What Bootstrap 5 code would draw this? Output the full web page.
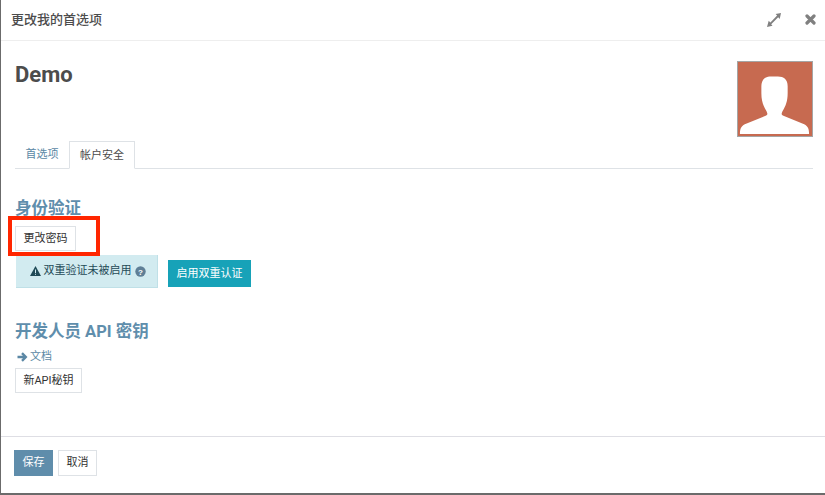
<!DOCTYPE html>
<html lang="zh"><head><meta charset="utf-8"><title>更改我的首选项</title>
<link href="https://cdn.jsdelivr.net/npm/bootstrap@5.3.0/dist/css/bootstrap.min.css" rel="stylesheet">
<style>
html,body{height:100%;overflow:hidden}
body{font-family:"Roboto","Noto Sans CJK SC",sans-serif;font-size:11px;color:#4c4c4c;background:#fff}
.dlg{height:495px;border-left:1px solid #6b6b6b;border-bottom:2px solid #6b6b6b}
.dlg-head{height:41px;border-bottom:1px solid #eee;padding:0 9px 0 10px}
.dlg-title{font-size:13px;font-weight:500;color:#4c4c4c}
.dlg-tools{gap:24px;margin-top:-1px}
.dlg-body{padding:0 12px 0 14px;position:relative}
.who{height:100px;padding-top:20px}
.who h1{font-size:22px;font-weight:700;line-height:28px;margin:0;color:#4c4c4c}
.face{width:76px;height:76px;border:1px solid #a5a5a5;background:#c76a50;display:block}
.tabbar{height:28px;border-bottom:1px solid #dee2e6;margin:0;padding:0;list-style:none}
.tabx{display:block;height:28px;padding:0 10.500px 0 10.500px;line-height:27px;font-size:11px;color:#5b88a5;text-decoration:none}
.tabx.on{color:#4c4c4c;background:#fff;border:1px solid #dee2e6;border-bottom-color:#fff;padding:0 10px;width:66px;white-space:nowrap}
.sect{font-size:16.500px;font-weight:700;color:#5f8eac;line-height:20px;margin:0}
.sect1{margin-top:30px}
.sect2{margin-top:34px}
.btn-plain{display:block;background:#fff;border:1px solid #dee2e6;border-radius:0;color:#333;font-size:11px;height:25px;line-height:23px;padding:0;text-align:center}
.pw{width:61px;margin-top:7px}
.twofa{margin-top:4px;margin-left:1px;gap:10px}
.note{width:142px;height:33px;background:#d2ebf0;border-bottom:1px solid #bfe0e7;border-right:1px solid #bfe0e7;color:#1f4a57;font-size:11px;gap:3px;padding-left:2px}
.btn-teal{background:#17a2b8;border:0;border-radius:0;color:#fff;font-size:11px;height:27px;line-height:27px;width:83px;padding:0;margin-top:5px}
.doc{display:flex;align-items:center;gap:2px;margin-top:6px;height:18px;font-size:11px;color:#5b88a5;text-decoration:none;padding-left:2px}
.newk{width:67px;margin-top:2px}
.redbox{position:absolute;left:7px;top:175px;width:92px;height:40px;border:4px solid #ff2600}
.dlg-foot{height:57px;border-top:1px solid #dedee4;padding:13px 13px;gap:5px}
.btn-save{background:#5f8dab;border:1px solid #5f8dab;border-radius:0;color:#fff;font-size:11px;width:39px;height:26px;padding:0;line-height:24px}
.btn-cancel{background:#fff;border:1px solid #dee2e6;border-radius:0;color:#333;font-size:11px;width:39px;height:26px;padding:0;line-height:24px}
</style></head><body>
<div class="dlg d-flex flex-column">
 <div class="dlg-head d-flex align-items-center justify-content-between">
  <div class="dlg-title">更改我的首选项</div>
  <div class="dlg-tools d-flex align-items-center">
   <svg width="14" height="14" viewBox="0 0 14 14" fill="#808080"><path d="M14 0 8.600.9l1.500 1.500-6.700 7-1.700-1.600L0 14l5.500-1.200-1.300-1.500 7-7 1.500 1.600z"/></svg>
   <svg width="11" height="11" viewBox="0 0 11 11"><path d="M2 2l7 7M9 2l-7 7" stroke="#808080" stroke-width="3.200" stroke-linecap="round"/></svg>
  </div>
 </div>
 <div class="dlg-body flex-grow-1">
  <div class="who d-flex justify-content-between align-items-start">
   <h1>Demo</h1>
   <svg class="face" viewBox="0 0 76 76"><path fill="#fff" d="M2 74c0-5 1-8 5-10L29 55c2-1 1-3 0-5-3-5-5-10-5-18v-7c0-7 4-10 10-10h7c6 0 10 3 10 10v7c0 8-2 13-5 18-1 2-2 4 0 5L68 64c4 2 5 5 5 10z"/></svg>
  </div>
  <ul class="tabbar d-flex">
   <li><a class="tabx" href="#">首选项</a></li>
   <li><a class="tabx on" href="#">帐户安全</a></li>
  </ul>
  <h2 class="sect sect1">身份验证</h2>
  <button class="btn-plain pw" type="button">更改密码</button>
  <div class="twofa d-flex align-items-start">
   <div class="note d-flex align-items-center justify-content-center">
    <svg width="11" height="10" viewBox="0 0 11 10"><path fill="#1f4a57" d="M5.500 0 11 10H0z"/><path stroke="#d2ebf0" d="M5.500 3.500v3.500M5.500 7.800v1"/></svg>
    <span>双重验证未被启用</span>
    <svg width="11" height="11" viewBox="0 0 11 11"><circle cx="5.500" cy="5.500" r="5.200" fill="#5f7f96"/><text x="5.500" y="8.500" text-anchor="middle" font-size="8" font-weight="700" fill="#fff" font-family="Liberation Sans">?</text></svg>
   </div>
   <button class="btn-teal" type="button">启用双重认证</button>
  </div>
  <h2 class="sect sect2">开发人员 API 密钥</h2>
  <a class="doc" href="#"><svg width="11" height="10" viewBox="0 0 11 10"><path d="M.5 5h8M5 1.200 8.800 5 5 8.800" fill="none" stroke="#5b88a5" stroke-width="2.400"/></svg>文档</a>
  <button class="btn-plain newk" type="button">新API秘钥</button>
  <div class="redbox"></div>
 </div>
 <div class="dlg-foot d-flex">
  <button class="btn-save" type="button">保存</button>
  <button class="btn-cancel" type="button">取消</button>
 </div>
</div>
<script src="https://cdn.jsdelivr.net/npm/bootstrap@5.3.0/dist/js/bootstrap.bundle.min.js"></script>
</body></html>
